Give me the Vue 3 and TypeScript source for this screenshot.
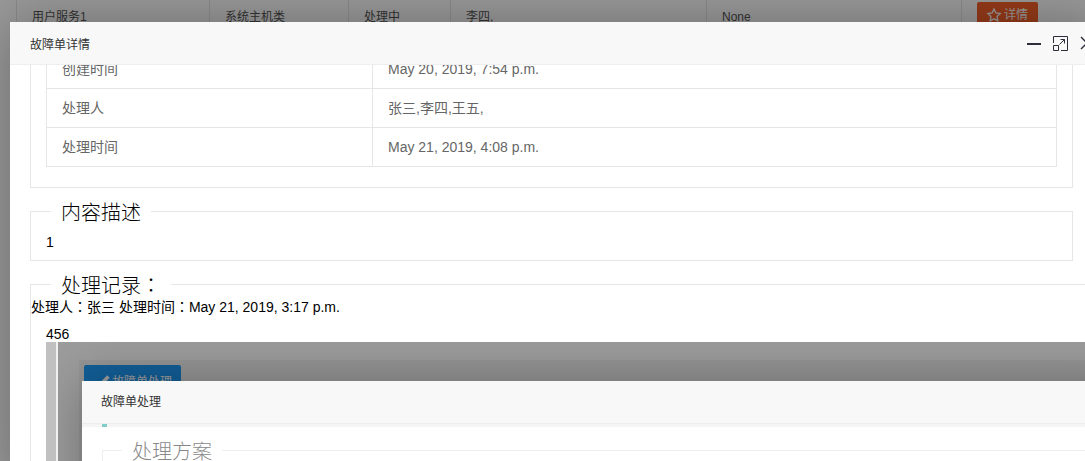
<template>
  <div class="page">
    <div class="bg-row">
      <div v-for="cell in bgCells" :key="cell.text" class="bg-cell" :style="{ width: cell.width + 'px' }">{{ cell.text }}</div>
      <div class="bg-cell bg-action">
        <button class="detail-btn">
          <svg width="16" height="16" viewBox="0 0 24 24" fill="none" stroke="currentColor" stroke-width="2">
            <path d="M12 3l2.800 5.900 6.400.9-4.600 4.500 1.100 6.400-5.700-3-5.700 3 1.100-6.400-4.600-4.500 6.400-.9z" />
          </svg>
          详情
        </button>
      </div>
    </div>

    <div class="shade"></div>

    <div class="modal">
      <div class="modal-title">
        <span>故障单详情</span>
        <div class="win-icons">
          <svg width="14" height="14" viewBox="0 0 14 14"><path d="M0 8h14" stroke="#2e2d3c" stroke-width="2" /></svg>
          <svg width="15" height="15" viewBox="0 0 15 15" fill="none" stroke="#2e2d3c">
            <path d="M.5 7V.5h14v14H8" />
            <path d="M.5 9.500h5v5h-5z" />
            <path d="M6.500 8.500l5-5M7.500 3.500h4v4" />
          </svg>
          <svg width="14" height="14" viewBox="0 0 14 14" fill="none" stroke="#2e2d3c" stroke-width="1.4">
            <path d="M1 1l12 12M13 1L1 13" />
          </svg>
        </div>
      </div>

      <div class="modal-body">
        <fieldset class="field info-field">
          <table class="info-table">
            <colgroup>
              <col class="col-label" />
              <col />
            </colgroup>
            <tbody>
              <tr v-for="row in infoRows" :key="row.label">
                <td>{{ row.label }}</td>
                <td>{{ row.value }}</td>
              </tr>
            </tbody>
          </table>
        </fieldset>

        <fieldset class="field desc-field">
          <legend>内容描述</legend>
          <div class="field-box">1</div>
        </fieldset>

        <fieldset class="field record-field">
          <legend>处理记录<span class="colon">：</span></legend>
          <div class="record-meta">处理人<span class="colon">：</span>张三 处理时间<span class="colon">：</span>May 21, 2019, 3:17 p.m.</div>
          <div class="record-text">456</div>

          <div class="shot">
            <div class="shot-strip"></div>
            <div class="shot-main">
              <div class="shot-panel">
                <button class="handle-btn">
                  <svg width="10" height="10" viewBox="3 3 18 18" fill="currentColor">
                    <path d="M3 21l1.500-6L16 3.500l4.500 4.500L9 19.500z" />
                  </svg>
                  故障单处理
                </button>
              </div>
            </div>

            <div class="inner-modal">
              <div class="inner-title">故障单处理</div>
              <div class="inner-tabs"><span class="inner-mark"></span></div>
              <fieldset class="inner-field">
                <legend>处理方案</legend>
              </fieldset>
            </div>
          </div>
        </fieldset>
      </div>
    </div>
  </div>
</template>

<script setup lang="ts">
const bgCells = [
  { text: '用户服务1', width: 193 },
  { text: '系统主机类', width: 139 },
  { text: '处理中', width: 102 },
  { text: '李四,', width: 256 },
  { text: 'None', width: 255 }
]

const infoRows = [
  { label: '创建时间', value: 'May 20, 2019, 7:54 p.m.' },
  { label: '处理人', value: '张三,李四,王五,' },
  { label: '处理时间', value: 'May 21, 2019, 4:08 p.m.' }
]
</script>

<style>
html,
body {
  margin: 0;
  overflow: hidden;
  background: #fff;
}
</style>

<style scoped>
.page {
  position: relative;
  width: 1085px;
  height: 461px;
  overflow: hidden;
  font-family: "Liberation Sans", "Noto Sans CJK SC", sans-serif;
  font-size: 14px;
  color: #000;
  background: #fff;
}

.bg-row {
  display: flex;
  margin-left: 16px;
  height: 60px;
}

.bg-cell {
  box-sizing: border-box;
  padding: 9px 0 0 15px;
  border-left: 1px solid #e6e6e6;
  font-size: 12px;
  line-height: 17px;
  color: #555;
}

.bg-action {
  padding: 2px 0 0 15px;
  flex: 1;
}

.detail-btn {
  display: flex;
  align-items: center;
  gap: 2px;
  width: 61px;
  height: 38px;
  padding: 0 0 12px 9px;
  box-sizing: border-box;
  border: none;
  border-radius: 2px;
  background: #f9622a;
  color: #fff;
  font: inherit;
}

.shade {
  position: absolute;
  inset: 0;
  background: rgba(0, 0, 0, 0.4);
}

.modal {
  position: absolute;
  left: 10px;
  top: 22px;
  width: 1090px;
  height: 460px;
  background: #fff;
  box-shadow: 1px 1px 50px rgba(0, 0, 0, 0.3);
}

.modal-title {
  display: flex;
  align-items: center;
  justify-content: space-between;
  box-sizing: border-box;
  height: 43px;
  padding: 0 0 0 20px;
  border-bottom: 1px solid #eee;
  background: #f8f8f8;
  font-size: 12px;
  color: #333;
}

.win-icons {
  display: flex;
  align-items: center;
  gap: 12px;
  margin-right: 6px;
}

.modal-body {
  height: 417px;
  overflow: hidden;
  padding: 0 20px;
}

.field {
  width: 1043px;
  box-sizing: border-box;
  margin: 7px 0 0;
  padding: 0;
  border: 1px solid #e6e6e6;
}

.field legend {
  margin-left: 20px;
  padding: 4px 10px 0;
  font-size: 20px;
  font-weight: 300;
  line-height: 28px;
}

.colon {
  font-family: "Noto Sans CJK TC", sans-serif;
  line-height: 1;
}

.info-field {
  margin-top: -16px;
  padding: 0 15px 20px;
  border-top: none;
}

.info-table {
  width: 100%;
  border-collapse: collapse;
  color: #666;
}

.col-label {
  width: 326px;
}

.info-table td {
  border: 1px solid #e6e6e6;
  padding: 9px 15px;
  line-height: 20px;
}

.field-box {
  padding: 5px 15px 8px;
  line-height: 20px;
}

.record-field {
  width: 1080px;
  border-right: none;
  border-bottom: none;
}

.record-meta {
  margin-top: -3px;
  line-height: 20px;
}

.record-text {
  margin-top: 9px;
  padding-left: 15px;
  line-height: 16px;
}

.shot {
  position: relative;
  display: flex;
  height: 140px;
  margin-left: 15px;
  overflow: hidden;
  background: #9c9c9c;
}

.shot-strip {
  position: relative;
  z-index: 1;
  width: 10px;
  flex: none;
  border-right: 2px solid #f0f0f0;
  background: #c0c0c0;
}

.shot-main {
  flex: 1;
  padding: 18px 0 0 21px;
}

.shot-panel {
  height: 100%;
  padding: 5px 0 0 5px;
  background: #959595;
}

.handle-btn {
  display: flex;
  align-items: center;
  gap: 2px;
  width: 97px;
  height: 30px;
  padding: 0 0 0 16px;
  box-sizing: border-box;
  border: none;
  border-radius: 2px;
  background: #125f99;
  color: #a0a0a0;
  font: inherit;
  font-size: 12px;
}

.inner-modal {
  position: absolute;
  left: 36px;
  top: 39px;
  width: 1040px;
  height: 200px;
  background: #fff;
  box-shadow: 1px 1px 50px rgba(0, 0, 0, 0.3);
}

.inner-title {
  box-sizing: border-box;
  height: 43px;
  padding-left: 19px;
  border-bottom: 1px solid #eee;
  background: #f8f8f8;
  font-size: 12px;
  line-height: 42px;
  color: #333;
}

.inner-tabs {
  height: 3px;
  padding-left: 20px;
  background: #f5f5f5;
}

.inner-mark {
  display: block;
  width: 5px;
  height: 3px;
  background: #7fcdc6;
}

.inner-field {
  margin: 7px 0 0 20px;
  padding: 0;
  height: 60px;
  border: 1px solid #eee;
}

.inner-field legend {
  margin-left: 19px;
  padding: 4px 10px 0;
  font-size: 20px;
  font-weight: 300;
  line-height: 28px;
  color: #888;
}
</style>
